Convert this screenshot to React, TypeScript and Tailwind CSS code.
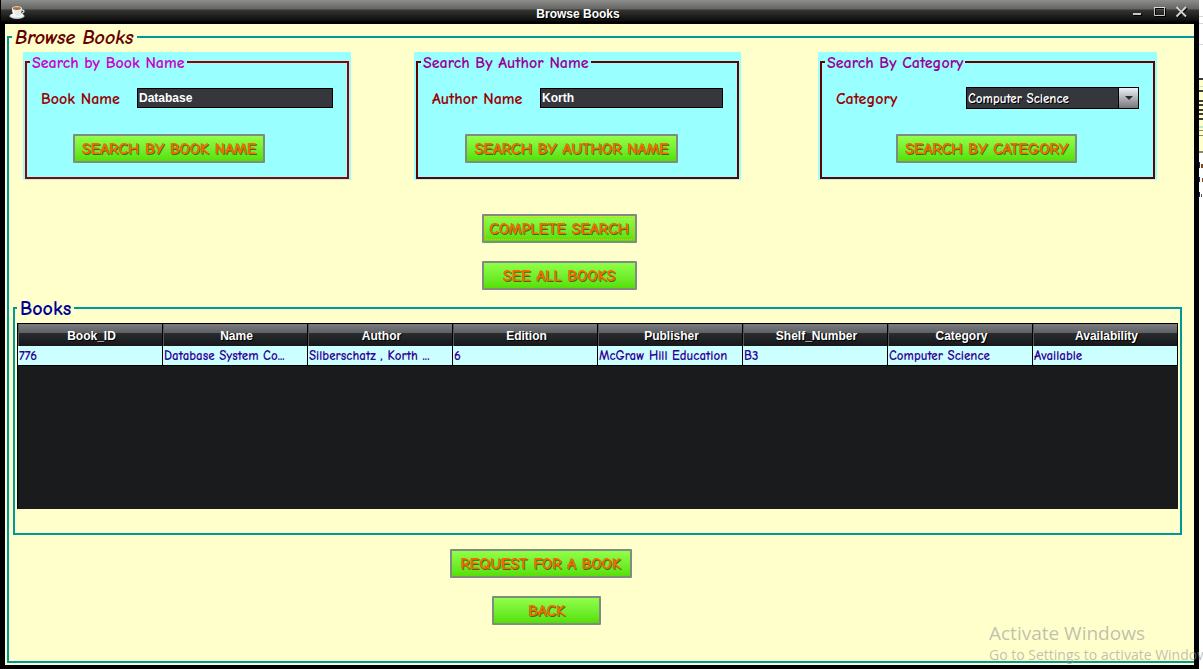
import { useState, type ReactNode } from "react";
import { clsx } from "clsx";

const comic = "font-['Comic_Sans_MS','Comic_Neue','Open_Sans',sans-serif]";
const arial = "font-['Liberation_Sans',Arial,sans-serif]";

function GreenButton({ children, className, focused }: { children: ReactNode; className: string; focused?: boolean }) {
  return (
    <button
      type="button"
      className={clsx(
        "h-[29px] shrink-0 whitespace-nowrap rounded-[1px] border-2 border-[#7f8c80] bg-linear-to-b from-[#90ff48] to-[#55e000] text-[16px] leading-5 font-bold text-[#ff6600] [text-shadow:1px_1px_0_#3f6a10]",
        focused && "outline-1 -outline-offset-4 outline-dotted outline-[#ffb400]",
        comic,
        className,
      )}
    >
      {children}
    </button>
  );
}

function SearchPanel({ title, frame, legend, children }: { title: string; frame: string; legend: string; children: ReactNode }) {
  return (
    <div className="bg-[#99ffff] px-[2px] pt-px pb-px">
      <fieldset className={clsx("border-2 pb-[14px]", frame)}>
        <legend className={clsx("ml-[3px] px-[2px] pt-[2px] text-[16px] leading-4 font-bold", comic, legend)}>{title}</legend>
        <div className="flex flex-col items-start gap-[25px] pt-4">{children}</div>
      </fieldset>
    </div>
  );
}

function TextField({ id, label, initial, labelWidth }: { id: string; label: string; initial: string; labelWidth: string }) {
  const [value, setValue] = useState(initial);
  return (
    <div className="flex h-[22px] w-full items-center px-[14px]">
      <label htmlFor={id} className={clsx("shrink-0 pt-[2px] text-[16px] leading-5 font-bold text-[#990000]", comic, labelWidth)}>
        {label}
      </label>
      <input
        id={id}
        type="text"
        value={value}
        onChange={(e) => setValue(e.target.value)}
        className={clsx("h-5 min-w-0 flex-1 border border-black bg-[#35373c] px-px text-[12px] leading-4 font-bold text-white", arial)}
      />
    </div>
  );
}

const columns = ["Book_ID", "Name", "Author", "Edition", "Publisher", "Shelf_Number", "Category", "Availability"];
const rows = [
  ["776", "Database System Co...", "Silberschatz , Korth ...", "6", "McGraw Hill Education", "B3", "Computer Science", "Available"],
];

function CoffeeIcon() {
  return (
    <svg viewBox="0 0 16 16" className="h-4 w-4" aria-hidden="true">
      <ellipse cx="8" cy="12" rx="7.6" ry="2.9" fill="#c9cdd0" />
      <ellipse cx="8" cy="11.4" rx="6.6" ry="2.2" fill="#f4f5f6" />
      <path d="M12.4 6.2c2.4-.6 3.2.8 2 2.2-.8.9-1.900 1.200-3 1.200" fill="none" stroke="#e4e6e8" strokeWidth="1.200" />
      <path d="M3 4.300c0 4.200 1.300 7.200 3 7.600h3.600c1.900-.5 3.200-3.400 3.200-7.600z" fill="#e6e8ea" />
      <path d="M3.400 6c.3 3 1.400 5.200 2.800 5.700h1.600C6 10.500 5 8.500 4.800 6z" fill="#fff" />
      <ellipse cx="7.900" cy="4.300" rx="4.900" ry="2.100" fill="#f3efe8" />
      <ellipse cx="7.900" cy="4.500" rx="4" ry="1.400" fill="#a9662c" />
      <path d="M5 4.200c1.500-.8 4-.8 5.500-.1" fill="none" stroke="#d9a468" strokeWidth=".6" />
    </svg>
  );
}

function TitleBar() {
  return (
    <header className="ml-px grid h-6 grid-cols-[1fr_auto_1fr] items-center bg-[linear-gradient(to_bottom,#8d8e8b_0px,#646562_9px,#343633_10px,#0c0d0b_21px,#000_22px)] pr-2 pl-2">
      <CoffeeIcon />
      <h1 className={clsx("pt-[3px] pr-[44px] text-[12px] leading-4 font-bold text-white [text-shadow:1px_1px_0_#000]", arial)}>Browse Books</h1>
      <div className="flex items-center justify-end gap-2">
        <button type="button" aria-label="Minimize" className="h-4 w-4">
          <svg viewBox="0 0 16 16" className="h-4 w-4">
            <path d="M7 10h8v2H7z" fill="#000" />
            <path d="M6 9h8v2H6z" fill="#c8c8c6" />
          </svg>
        </button>
        <button type="button" aria-label="Maximize" className="h-4 w-4">
          <svg viewBox="0 0 16 16" className="h-4 w-4">
            <path d="M4.500 4.500h10v8h-10z" fill="none" stroke="#000" />
            <path d="M3.500 3.500h10v8h-10z" fill="none" stroke="#c8c8c6" />
            <path d="M3 3h11v1H3z" fill="#dcdcda" />
          </svg>
        </button>
        <button type="button" aria-label="Close" className="h-4 w-4">
          <svg viewBox="0 0 16 16" className="h-4 w-4">
            <path d="M2.500 4l9 9M12 4l-9 9" stroke="#000" strokeWidth="2" />
            <path d="M1.500 3l9.500 9.500M11 3l-9.500 9.500" stroke="#d0d0ce" strokeWidth="2" />
          </svg>
        </button>
      </div>
    </header>
  );
}

function BooksTable() {
  return (
    <div className="min-h-[186px] border-l border-black bg-[#1a1b1d]">
      <table className="w-full table-fixed border-separate border-spacing-0">
        <thead>
          <tr>
            {columns.map((name) => (
              <th
                key={name}
                scope="col"
                className={clsx(
                  "h-[23px] border-t border-r border-black bg-[linear-gradient(to_bottom,#7b7c80_0px,#5f6064_9px,#2a2d30_9px,#15171a_22px)] p-0 pt-px pl-[3px] text-center text-[12px] leading-4 font-bold text-white shadow-[inset_1px_0_0_#55565a] [text-shadow:1px_1px_0_#000]",
                  arial,
                )}
              >
                {name}
              </th>
            ))}
          </tr>
        </thead>
        <tbody>
          {rows.map((row) => (
            <tr key={row[0]}>
              {row.map((cell, i) => (
                <td
                  key={columns[i]}
                  className={clsx(
                    "h-5 border-r border-b border-black bg-[#ccffff] p-0 pl-px text-[13px] leading-[18px] font-bold whitespace-nowrap text-[#330099]",
                    comic,
                  )}
                >
                  {cell}
                </td>
              ))}
            </tr>
          ))}
        </tbody>
      </table>
    </div>
  );
}

function DesktopEdge() {
  return (
    <div className="relative w-1 shrink-0 overflow-hidden bg-white" aria-hidden="true">
      <svg viewBox="0 0 4 200" className="h-[200px] w-1">
        <path d="M0 16h4v1H0zM0 23h4v1H0zM0 44h4v1H0z" fill="#d8d8d8" />
        <path d="M0 78h4v74H0z" fill="#ffffcc" />
        <path d="M0 86h4v1H0zM0 126h4v2H0z" fill="#bfe8c8" />
        <path d="M0 78h4v2H0zM0 90h4v2H0zM0 100h4v2H0zM0 104h4v2H0zM0 109h4v2H0zM0 113h4v2H0zM0 118h4v2H0z" fill="#3c3c38" />
        <path d="M0 130h4v1H0zM0 135h4v1H0zM0 151h4v2H0z" fill="#8a8a6a" />
        <path d="M0 162h1v6H0zM0 177h1v5H0zM0 192h1v5H0z" fill="#202060" />
        <path d="M2 164h2v4H2zM3 178h1v4H3zM2 194h1v3H2z" fill="#7a4a2a" />
      </svg>
    </div>
  );
}

export default function App() {
  const [category, setCategory] = useState("Computer Science");
  return (
    <div className="relative flex min-h-screen w-full overflow-hidden bg-black">
      <div className="flex min-w-0 flex-1 flex-col bg-black">
        <TitleBar />
        <main className="mr-[5px] mb-1 ml-[5px] flex flex-1 flex-col bg-[#ffffcc] pb-[2px] pl-[2px]">
          <fieldset className="flex-1 border-2 border-r-0 border-[#009999]">
            <legend className={clsx("ml-[3px] px-[3px] pt-[2px] text-[20px] leading-6 font-bold text-[#660000] italic", comic)}>Browse Books</legend>

            <div className="grid grid-cols-[391fr_404fr_339fr] pt-[2px] pr-[37px] pl-[14px]">
              <div className="pr-[63px]">
                <SearchPanel title="Search by Book Name" frame="border-[#990000]" legend="text-[#cc00cc]">
                  <TextField id="book" label="Book Name" initial="Database" labelWidth="w-24" />
                  <GreenButton className="ml-[46px] w-48">SEARCH BY BOOK NAME</GreenButton>
                </SearchPanel>
              </div>
              <div className="pr-[77px]">
                <SearchPanel title="Search By Author Name" frame="border-[#660000]" legend="text-[#990099]">
                  <TextField id="author" label="Author Name" initial="Korth" labelWidth="w-[108px]" />
                  <GreenButton className="ml-[47px] w-[213px]">SEARCH BY AUTHOR NAME</GreenButton>
                </SearchPanel>
              </div>
              <SearchPanel title="Search By Category" frame="border-[#660000]" legend="text-[#990099]">
                <div className="flex h-[22px] w-full items-center px-[14px]">
                  <label htmlFor="category" className={clsx("w-[130px] shrink-0 pt-[2px] text-[16px] leading-5 font-bold text-[#990000]", comic)}>
                    Category
                  </label>
                  <div className="relative flex min-w-0 flex-1">
                    <select
                      id="category"
                      value={category}
                      onChange={(e) => setCategory(e.target.value)}
                      className={clsx(
                        "h-[22px] w-full appearance-none border border-black bg-[#35373c] pt-px pl-px text-[13px] leading-5 font-bold text-white [text-shadow:1px_1px_0_#000]",
                        comic,
                      )}
                    >
                      <option>Computer Science</option>
                    </select>
                    <span className="pointer-events-none absolute inset-y-px right-px flex w-5 items-center justify-center border-l border-black bg-linear-to-b from-[#f0f2f8] to-[#77787c]">
                      <svg viewBox="0 0 8 4" className="h-1 w-2" aria-hidden="true">
                        <path d="M0 0h8L4 4z" fill="#2a2c30" />
                      </svg>
                    </span>
                  </div>
                </div>
                <GreenButton className="ml-[74px] w-[181px]">SEARCH BY CATEGORY</GreenButton>
              </SearchPanel>
            </div>

            <div className="flex flex-col items-center gap-[18px] pt-[34px] pr-[85px]">
              <GreenButton className="w-[155px]" focused>
                COMPLETE SEARCH
              </GreenButton>
              <GreenButton className="w-[155px]">SEE ALL BOOKS</GreenButton>
            </div>

            <fieldset className="mt-[5px] mr-3 ml-1 border-2 border-[#009999] px-[2px] pb-6">
              <legend className={clsx("px-[3px] pt-[2px] text-[20px] leading-6 font-bold text-[#000099]", comic)}>Books</legend>
              <div className="pt-[2px]">
                <BooksTable />
              </div>
            </fieldset>

            <div className="flex flex-col items-center gap-[18px] pt-[14px] pr-[110px] pb-9">
              <GreenButton className="mr-3 w-[182px]">REQUEST FOR A BOOK</GreenButton>
              <GreenButton className="w-[109px]">BACK</GreenButton>
            </div>
          </fieldset>
        </main>
      </div>
      <DesktopEdge />

      <div className="pointer-events-none absolute right-0 bottom-1 w-[214px] overflow-hidden font-['Segoe_UI','Open_Sans',sans-serif] whitespace-nowrap text-[#96969699]">
        <p className="text-[19px] leading-6">Activate Windows</p>
        <p className="text-[14px] leading-5">Go to Settings to activate Windows.</p>
      </div>
    </div>
  );
}
